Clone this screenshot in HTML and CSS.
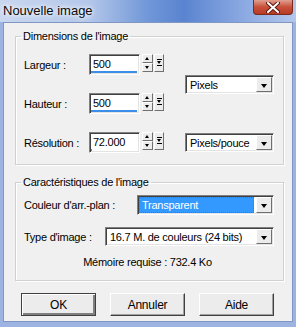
FILE: index.html
```html
<!DOCTYPE html>
<html lang="fr">
<head>
  <meta charset="UTF-8">
  <title>Nouvelle image</title>
  <link rel="stylesheet" href="styles.css">
</head>
<body>
  <div class="window">
    <div class="titlebar">
      <span class="title">Nouvelle image</span>
      <span class="close">
        <svg width="14" height="11" viewBox="0 0 14 11"><path d="M2 1 L12 10 M12 1 L2 10" stroke="#5a1a10" stroke-width="4" stroke-linecap="round"/><path d="M2 1 L12 10 M12 1 L2 10" stroke="#fff" stroke-width="2" stroke-linecap="round"/></svg>
      </span>
    </div>
    <div class="client">
      <fieldset class="group">
        <legend>Dimensions de l'image</legend>
        <div class="dims">
          <label class="dim-label">Largeur :</label>
          <div class="spin-field">
            <div class="edit">500<span class="bar" style="width:46px"></span></div>
            <div class="spin"><span class="btn up"></span><span class="btn down"></span></div>
            <span class="btn jump"></span>
          </div>
          <div class="combo unit-combo"><span class="value">Pixels</span><span class="arrow"></span></div>

          <label class="dim-label">Hauteur :</label>
          <div class="spin-field">
            <div class="edit">500<span class="bar" style="width:46px"></span></div>
            <div class="spin"><span class="btn up"></span><span class="btn down"></span></div>
            <span class="btn jump"></span>
          </div>

          <label class="dim-label">Résolution :</label>
          <div class="spin-field">
            <div class="edit">72.000<span class="bar" style="width:1px"></span></div>
            <div class="spin"><span class="btn up"></span><span class="btn down"></span></div>
            <span class="btn jump"></span>
          </div>
          <div class="combo"><span class="value">Pixels/pouce</span><span class="arrow"></span></div>
        </div>
      </fieldset>

      <fieldset class="group props">
        <legend>Caractéristiques de l'image</legend>
        <div class="prop-row">
          <label>Couleur d'arr.-plan :</label>
          <div class="combo wide-1"><span class="value selected">Transparent</span><span class="arrow"></span></div>
        </div>
        <div class="prop-row">
          <label>Type d'image :</label>
          <div class="combo wide-2"><span class="value">16.7 M. de couleurs (24 bits)</span><span class="arrow"></span></div>
        </div>
        <p class="memory">Mémoire requise : 732.4 Ko</p>
      </fieldset>

      <div class="buttons">
        <button class="default">OK</button>
        <button>Annuler</button>
        <button>Aide</button>
      </div>
    </div>
  </div>
</body>
</html>
```

FILE: styles.css
```css
* {
  margin: 0;
  padding: 0;
  box-sizing: border-box;
}

body {
  font-family: "Liberation Sans", Arial, sans-serif;
  font-size: 11px;
  letter-spacing: -0.25px;
  color: #000;
  background: #fff;
}

/* Window frame */
.window {
  width: 296px;
  height: 327px;
  display: flex;
  flex-direction: column;
  background: #9db4e2;
  padding: 0 3px 5px 3px;
}

.titlebar {
  height: 22px;
  margin: 0 -3px;
  display: flex;
  align-items: flex-start;
  justify-content: space-between;
  background: linear-gradient(to right, #c9d7ef 0%, #b4c7ea 30%, #7097d8 50%, #5a84d0 62%, #86a5e0 80%, #b3c7ec 100%);
}

.title {
  font-size: 13px;
  letter-spacing: 0;
  padding: 3px 0 0 3px;
  color: #0a0a0a;
  text-shadow: 0 0 6px #fff, 0 0 4px #fff;
}

.close {
  width: 40px;
  height: 15px;
  margin-right: 3px;
  display: flex;
  align-items: center;
  justify-content: center;
  border: 1px solid #7a2a1e;
  border-top: none;
  border-radius: 0 0 4px 4px;
  background: linear-gradient(#e0a090, #c8503a 50%, #b83a26);
}

.client {
  flex: 1;
  background: #f0f0f0;
  border: 1px solid #7f97c2;
  padding: 7px 8px 0 11px;
}

/* Group boxes */
.group {
  border: 1px solid #d0d0d0;
  box-shadow: 1px 1px 0 #fff, inset 1px 1px 0 #fff;
  padding: 0 9px 0 5px;
}

.group legend {
  padding: 0 2px;
}

.dims {
  display: grid;
  grid-template-columns: 65px 96px 89px;
  grid-template-rows: 21px 21px 21px;
  row-gap: 18px;
  align-items: center;
  padding: 12px 0 11px 3px;
}

.unit-combo {
  grid-column: 3;
  grid-row: 1 / 3;
}

.spin-field {
  display: flex;
  align-items: flex-start;
  height: 21px;
}

.edit {
  position: relative;
  width: 51px;
  height: 21px;
  background: #fff;
  border: 1px solid;
  border-color: #808080 #fff #fff #808080;
  box-shadow: inset 1px 1px 0 #404040, inset -1px -1px 0 #e3e3e3;
  padding: 3px 0 0 3px;
}

.edit .bar {
  position: absolute;
  left: 1px;
  bottom: 1px;
  height: 2px;
  background: #3d8ee8;
}

.spin {
  display: flex;
  flex-direction: column;
  margin: 0 1px 0 2px;
}

.btn {
  display: block;
  width: 11px;
  height: 9px;
  background: #ececec;
  border: 1px solid;
  border-color: #fff #707070 #707070 #fff;
  position: relative;
}

.btn.up::after,
.btn.down::after,
.btn.jump::after {
  content: "";
  position: absolute;
  left: 2px;
  border-left: 2.5px solid transparent;
  border-right: 2.5px solid transparent;
}

.btn.up::after {
  top: 2px;
  border-bottom: 3px solid #000;
}

.btn.down::after {
  top: 2px;
  border-top: 3px solid #000;
}

.btn.jump {
  width: 10px;
  height: 18px;
}

.btn.jump::before {
  content: "";
  position: absolute;
  left: 2px;
  top: 4px;
  width: 5px;
  height: 1px;
  background: #000;
  box-shadow: 0 6px 0 #000;
}

.btn.jump::after {
  left: 2px;
  top: 6px;
  border-top: 3px solid #000;
}

/* Combo boxes */
.combo {
  display: flex;
  align-items: stretch;
  height: 19px;
  background: #fff;
  border: 1px solid;
  border-color: #808080 #fff #fff #808080;
  box-shadow: inset 1px 1px 0 #404040, inset -1px -1px 0 #e3e3e3;
  padding: 1px;
}

.combo .value {
  flex: 1;
  padding: 2px 0 0 3px;
  white-space: nowrap;
  overflow: hidden;
}

.combo .value.selected {
  background: #3399ff;
  color: #fff;
  outline: 1px dotted #c06000;
  outline-offset: -1px;
  margin-right: 2px;
}

.combo .arrow {
  flex: none;
  width: 16px;
  background: #ececec;
  border: 1px solid;
  border-color: #fff #707070 #707070 #fff;
  position: relative;
}

.combo .arrow::after {
  content: "";
  position: absolute;
  left: 4px;
  top: 6px;
  border-left: 3.5px solid transparent;
  border-right: 3.5px solid transparent;
  border-top: 4px solid #000;
}

/* Image properties */
.props {
  margin-top: 11px;
  padding-top: 7px;
}

.prop-row {
  display: flex;
  align-items: center;
  justify-content: space-between;
  padding-left: 3px;
  margin-bottom: 12px;
}

.wide-1 {
  width: 137px;
  height: 20px;
}

.wide-2 {
  width: 169px;
}

.memory {
  text-align: center;
  padding: 0 0 12px 0;
  margin-top: -2px;
}

/* Dialog buttons */
.buttons {
  display: flex;
  gap: 14px;
  padding: 12px 0 0 6px;
}

.buttons button {
  width: 75px;
  height: 23px;
  font-family: inherit;
  font-size: 12px;
  letter-spacing: -0.25px;
  background: #ececec;
  border: 1px solid;
  border-color: #fff #404040 #404040 #fff;
  box-shadow: inset -1px -1px 0 #a0a0a0;
}

.buttons button.default {
  border-color: #404040;
  box-shadow: inset 1px 1px 0 #fff, inset -2px -2px 0 #808080;
}
```
